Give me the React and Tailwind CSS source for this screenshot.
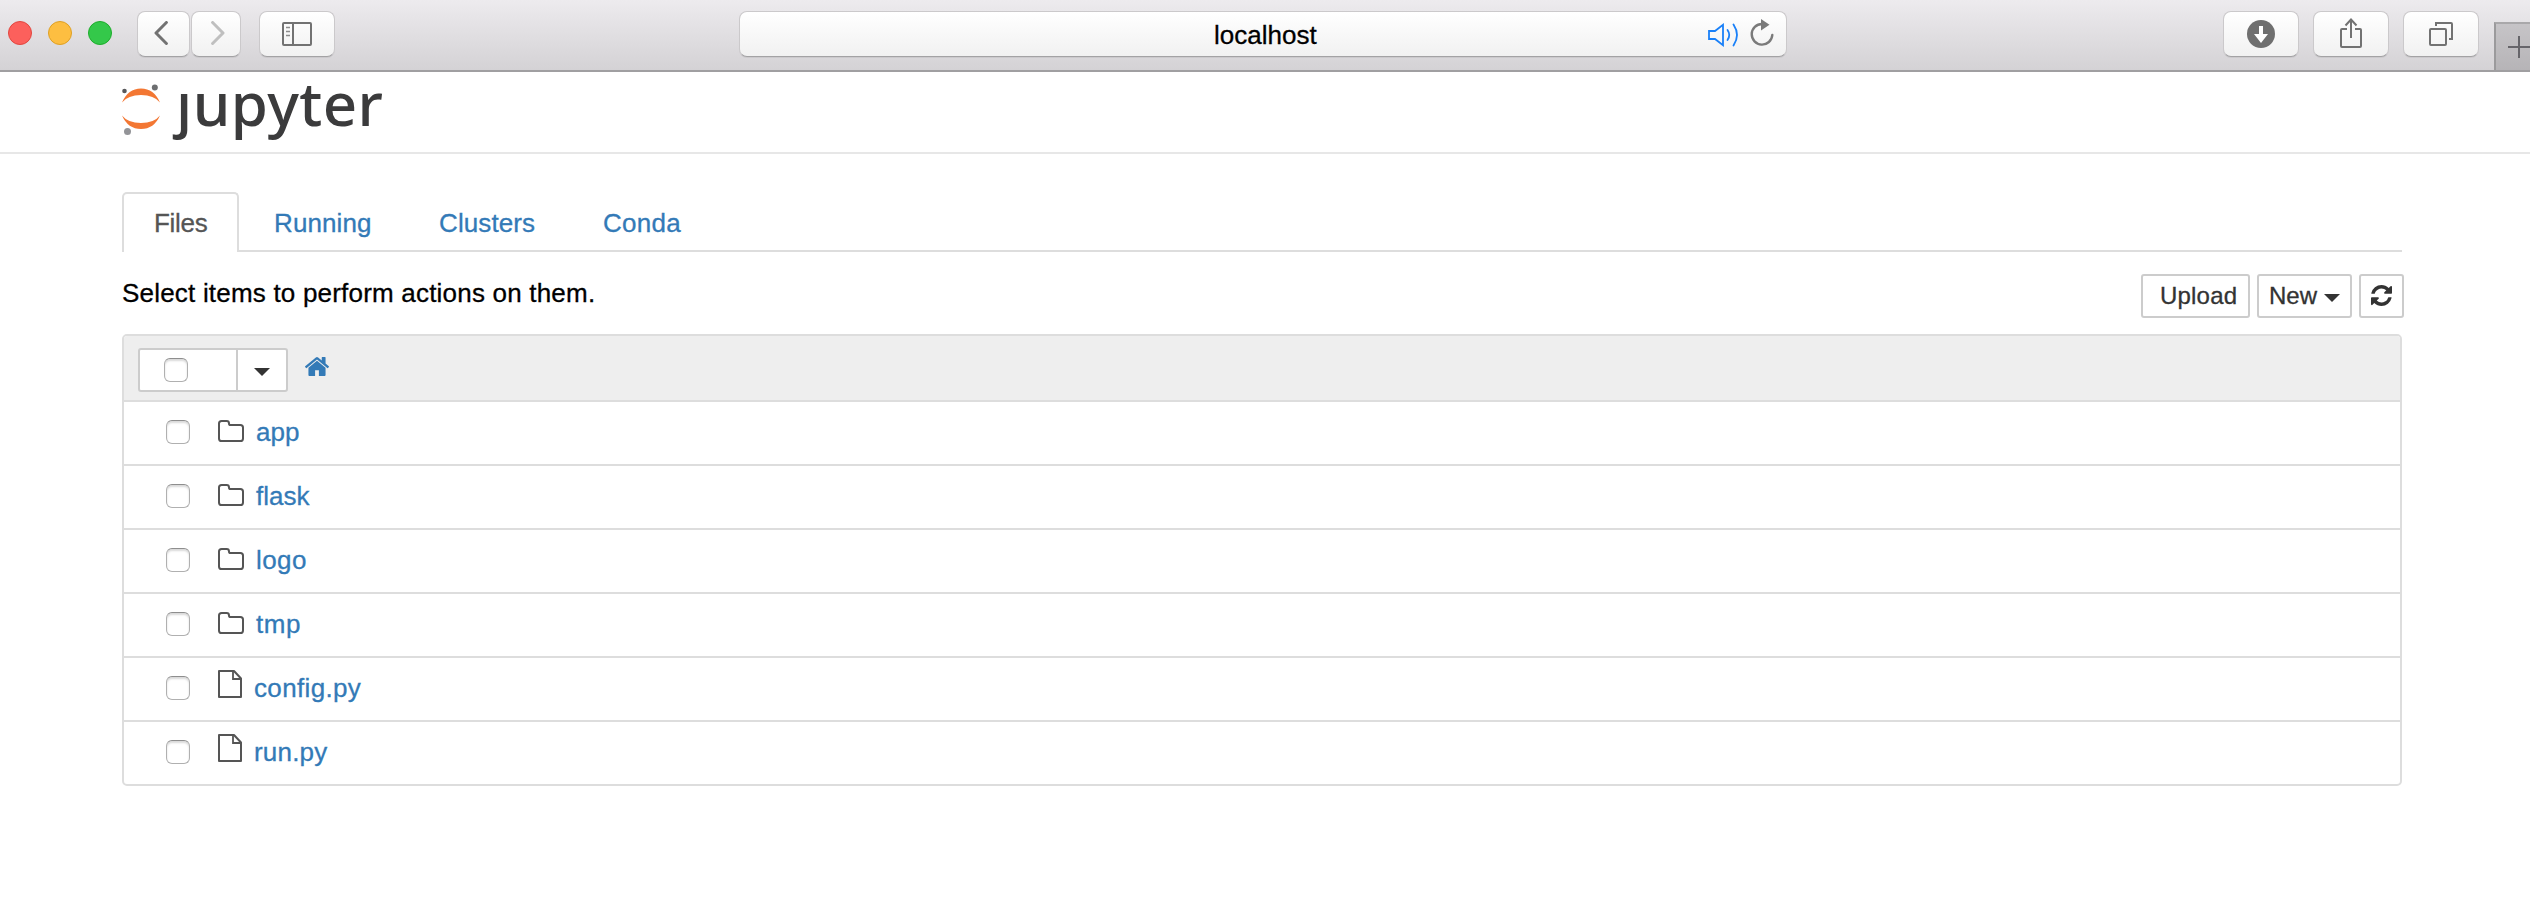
const rows = [
  { name: 'app', dir: true, gap: 'tracking-[0.1px]' },
  { name: 'flask', dir: true, gap: 'tracking-[0px]' },
  { name: 'logo', dir: true, gap: 'tracking-[0.4px]' },
  { name: 'tmp', dir: true, gap: 'tracking-[0.5px]' },
  { name: 'config.py', dir: false, gap: 'tracking-[0.35px]' },
  { name: 'run.py', dir: false, gap: 'tracking-[0.2px]' },
];

const chrome =
  'flex shrink-0 items-center justify-center rounded-[8px] border border-[#cbc9cb] border-b-[#a3a2a4] bg-linear-to-b from-white to-[#f1f1f1] shadow-[0_1px_0_rgba(0,0,0,0.06)]';

function Checkbox() {
  return (
    <span className="block size-6 shrink-0 rounded-[6px] border border-[#b0b0b0] border-t-[#8e8e8e] bg-white shadow-[inset_0_2px_2px_rgba(0,0,0,0.15)]" />
  );
}

function Caret() {
  return (
    <svg className="block h-2 w-4" viewBox="0 0 16 8">
      <path d="M0 0H16L8 8Z" fill="#333" />
    </svg>
  );
}

function Folder() {
  return (
    <svg className="mt-[18px] ml-7 block h-[22px] w-[26px] shrink-0" viewBox="0 0 26 22" fill="none" stroke="#555" strokeWidth="2">
      <path d="M1 3.6Q1 1 3.6 1H8.6Q11 1 11 3.4Q11 5 12.6 5H22.4Q25 5 25 7.6V18.4Q25 21 22.4 21H3.6Q1 21 1 18.4Z" />
    </svg>
  );
}

function Page() {
  return (
    <svg className="mt-3 ml-7 block h-7 w-6 shrink-0" viewBox="0 0 24 28" fill="none" stroke="#555" strokeWidth="2">
      <path d="M1 1H16L23 8.5V27H1Z" strokeLinejoin="round" />
      <path d="M15 1V9H23" strokeWidth="1.8" />
    </svg>
  );
}

function Toolbar() {
  return (
    <header className="flex h-[72px] items-start overflow-hidden border-b-2 border-[#a09fa1] bg-linear-to-b from-[#edebee] to-[#d4d2d5]">
      <div className="mt-[21px] ml-2 flex gap-4">
        <span className="size-6 rounded-full border border-[#e2463f] bg-[#fc605c]" />
        <span className="size-6 rounded-full border border-[#dfa023] bg-[#fdbe41]" />
        <span className="size-6 rounded-full border border-[#1dad2b] bg-[#34c84a]" />
      </div>
      <div className="mt-[11px] ml-[25px] flex gap-px">
        <div className={`${chrome} h-[46px] w-[53px]`}>
          <svg className="mr-[5px] mb-0.5 h-6 w-3.5" viewBox="0 0 14 24" fill="none" stroke="#727272" strokeWidth="3" strokeLinecap="round" strokeLinejoin="round">
            <path d="M12.4 1.5L2 12L12.4 22.5" />
          </svg>
        </div>
        <div className={`${chrome} h-[46px] w-[50px]`}>
          <svg className="ml-[3px] mb-0.5 h-6 w-3.5" viewBox="0 0 14 24" fill="none" stroke="#bfbfbf" strokeWidth="3" strokeLinecap="round" strokeLinejoin="round">
            <path d="M1.6 1.5L12 12L1.6 22.5" />
          </svg>
        </div>
      </div>
      <div className={`${chrome} mt-[11px] ml-[18px] h-[46px] w-[76px]`}>
        <svg className="h-6 w-[30px]" viewBox="0 0 30 24" fill="none" stroke="#727272" strokeWidth="2">
          <rect x="1" y="1" width="28" height="22" rx="1" />
          <path d="M11 1V23" />
          <path d="M4 5.5H8M4 9.5H8M4 13.5H8" strokeWidth="1.6" stroke="#8c8c8c" />
        </svg>
      </div>
      <div className={`${chrome} mt-[11px] ml-[404px] h-[46px] w-[1048px]`}>
        <span className="mt-0.5 ml-[474px] text-[26px] leading-[44px] tracking-[0px] text-black [-webkit-text-stroke:0.3px]">localhost</span>
        <svg className="mt-px mr-[-1px] ml-auto h-[24px] w-[32px]" viewBox="0 0 32 24" fill="none" stroke="#1a80f8" strokeWidth="1.8">
          <path d="M1 8H7L15 1.8V22.2L7 16H1Z" />
          <path d="M19.5 7Q23 12 19.5 17" strokeLinecap="round" />
          <path d="M25.500 1.5Q32.500 12 25.500 22.5" strokeLinecap="round" />
        </svg>
        <svg className="mt-[-2px] mr-3 ml-[11px] h-[28px] w-6" viewBox="0 0 24 28">
          <path d="M12 5A10.3 10.3 0 1 0 22.3 16" fill="none" stroke="#7a7a7a" strokeWidth="2.4" strokeLinecap="round" />
          <path d="M11 0V11.500L19.500 5.8Z" fill="#7a7a7a" />
        </svg>
      </div>
      <div className="mt-[11px] ml-[436px] flex gap-3.5">
        <div className={`${chrome} h-[46px] w-[76px]`}>
          <svg className="size-7" viewBox="0 0 28 28">
            <circle cx="14" cy="14" r="14" fill="#6f6f6f" />
            <path d="M12 6H16V14H21L14 23L7 14H12Z" fill="#fff" />
          </svg>
        </div>
        <div className={`${chrome} h-[46px] w-[76px]`}>
          <svg className="mb-0.5 h-[30px] w-[22px]" viewBox="0 0 22 30" fill="none" stroke="#727272" strokeWidth="2">
            <path d="M7 11H2Q1 11 1 12V28Q1 29 2 29H20Q21 29 21 28V12Q21 11 20 11H15" />
            <path d="M11 20V2M5.5 7.5L11 1.5L16.500 7.5" />
          </svg>
        </div>
        <div className={`${chrome} h-[46px] w-[76px]`}>
          <svg className="h-6 w-6" viewBox="0 0 24 24" fill="none" stroke="#727272" strokeWidth="2">
            <rect x="1" y="7" width="16" height="16" rx="1" />
            <path d="M7 4V1H22Q23 1 23 2V17H20" />
          </svg>
        </div>
      </div>
      <div className="mt-[22px] ml-[15px] flex h-12 w-[36px] shrink-0 items-center border-t-2 border-l-2 border-t-[#a9a8aa] border-l-[#9b9a9c] bg-linear-to-b from-[#c6c4c7] to-[#b6b4b7]">
        <svg className="ml-3 size-[22px] shrink-0" viewBox="0 0 22 22" stroke="#66656a" strokeWidth="2">
          <path d="M11 0V22M0 11H22" />
        </svg>
      </div>
    </header>
  );
}

export default function App() {
  return (
    <div className="h-[924px] w-[2530px] overflow-hidden bg-white font-['Liberation_Sans',Arial,sans-serif] text-[26px]">
      <Toolbar />
      <div className="h-[82px] border-b-2 border-[#e7e7e7] pl-[120px]">
        <svg className="block h-[80px] w-[270px] overflow-visible" viewBox="0 0 270 80">
          <path d="M2 30.500Q8 16.500 21 16.500T40 30.500Q34 23 21 23T2 30.500Z" fill="#f37733" />
          <path d="M2 43.500Q8 57 21 57T40 43.500Q34 51 21 51T2 43.500Z" fill="#f37733" />
          <circle cx="4.500" cy="19" r="2.300" fill="#58585a" />
          <circle cx="34.800" cy="15.500" r="3" fill="#6d6e70" />
          <circle cx="7.500" cy="59.500" r="3.500" fill="#939498" />
          <text x="56" y="53.500" fontFamily="'Noto Sans', 'Open Sans', sans-serif" fontSize="60" fontWeight="500" fill="#3b3b3c" textLength="207">ȷupyter</text>
        </svg>
      </div>
      <main className="ml-[122px] w-[2280px] [-webkit-text-stroke:0.3px]">
        <nav className="mt-[38px] flex h-[60px] border-b-2 border-[#ddd] leading-[58px] text-[#337ab7]">
          <span className="h-[60px] w-[117px] rounded-t-[5px] border-2 border-b-0 border-[#ddd] bg-white pl-[30px] tracking-[-0.3px] text-[#555]">Files</span>
          <span className="ml-[35px] w-[99px] pt-0.5 tracking-[0.1px]">Running</span>
          <span className="ml-[66px] w-[97px] pt-0.5 tracking-[0.1px]">Clusters</span>
          <span className="ml-[67px] pt-0.5 tracking-[0.3px]">Conda</span>
        </nav>
        <div className="flex h-[82px] items-start">
          <span className="mt-[21px] leading-10 tracking-[0.2px] whitespace-nowrap text-black">Select items to perform actions on them.</span>
          <div className="-mr-0.5 mt-[22px] ml-auto flex gap-[7px] text-[24px] leading-[40px] text-[#333]">
            <span className="h-11 w-[109px] rounded-[3px] border-2 border-[#ccc] pl-[17px] tracking-[0.2px]">Upload</span>
            <span className="flex h-11 w-[95px] rounded-[3px] border-2 border-[#ccc] pl-2.5">
              New
              <span className="mt-[18px] ml-[7px]"><Caret /></span>
            </span>
            <span className="h-11 w-[45px] rounded-[3px] border-2 border-[#ccc] pt-[9px] pl-[10px]">
              <svg className="size-[21px]" viewBox="0 0 1536 1536" fill="#333">
                <path d="M1511 928q0 5-1 7-64 268-268 434.5t-478 166.5q-146 0-282.5-55t-243.5-157l-129 129q-19 19-45 19t-45-19-19-45v-448q0-26 19-45t45-19h448q26 0 45 19t19 45-19 45l-137 137q71 66 161 102t187 36q134 0 250-65t186-179q11-17 53-117 8-23 30-23h192q13 0 22.500 9.500t9.500 22.500zm25-800v448q0 26-19 45t-45 19h-448q-26 0-45-19t-19-45 19-45l138-138q-148-137-349-137-134 0-250 65t-186 179q-11 17-53 117-8 23-30 23h-199q-13 0-22.500-9.500t-9.500-22.500v-7q65-268 270-434.500t480-166.500q146 0 284 55.500t245 156.500l130-129q19-19 45-19t45 19 19 45z" />
              </svg>
            </span>
          </div>
        </div>
        <section className="rounded-[5px] border-2 border-[#ddd]">
          <div className="flex h-16 items-start rounded-t-[3px] bg-[#eee] pt-3 pl-3.5">
            <div className="flex h-11 w-[150px] rounded-[3px] border-2 border-[#ccc] bg-white">
              <div className="w-[98px] border-r-2 border-[#ccc] pt-2 pl-6"><Checkbox /></div>
              <div className="pt-[18px] pl-4"><Caret /></div>
            </div>
            <svg className="mt-[9px] ml-[17px] h-[19px] w-6" viewBox="25 253 1615 1283" preserveAspectRatio="none" fill="#337ab7">
              <path d="M1408 992v480q0 26-19 45t-45 19h-384v-384h-256v384h-384q-26 0-45-19t-19-45v-480q0-1 .5-3t.5-3l575-474 575 474q1 2 1 6zm223-69l-62 74q-8 9-21 11h-3q-13 0-21-7l-692-577-692 577q-12 8-24 7-13-2-21-11l-62-74q-8-10-7-23.500t11-21.500l719-599q32-26 76-26t76 26l244 204v-195q0-14 9-23t23-9h192q14 0 23 9t9 23v408l219 182q10 8 11 21.500t-7 23.500z" />
            </svg>
          </div>
          {rows.map((r) => (
            <div key={r.name} className="flex h-16 items-start border-t-2 border-[#ddd] pl-[42px]">
              <div className="pt-[18px]"><Checkbox /></div>
              {r.dir ? <Folder /> : <Page />}
              <span className={`${r.gap} ml-3 leading-[60px] text-[#337ab7]`}>{r.name}</span>
            </div>
          ))}
        </section>
      </main>
    </div>
  );
}
